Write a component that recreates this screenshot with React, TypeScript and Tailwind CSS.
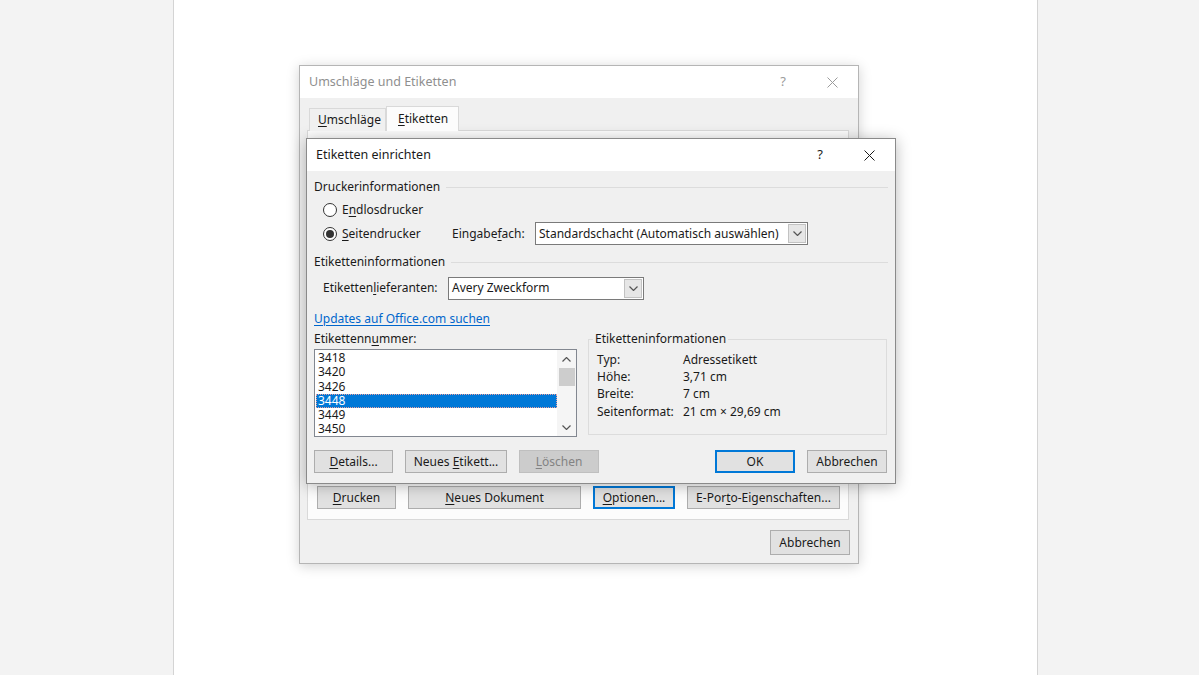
import React from "react";

const U = ({ children }: { children: React.ReactNode }) => (
  <span className="underline decoration-1 underline-offset-[2px]">{children}</span>
);

const CloseIcon = ({ color }: { color: string }) => (
  <svg width="11" height="11" viewBox="0 0 11 11">
    <path d="M0.5 0.5 L10.5 10.5 M10.5 0.5 L0.5 10.5" stroke={color} strokeWidth="1" fill="none" />
  </svg>
);

const Chevron = ({ up, color = "#333" }: { up?: boolean; color?: string }) => (
  <svg width="9" height="5" viewBox="0 0 9 5">
    <path d={up ? "M0.5 4.5 L4.5 0.5 L8.5 4.5" : "M0.5 0.5 L4.5 4.5 L8.5 0.5"} stroke={color} strokeWidth="1.2" fill="none" />
  </svg>
);

const TitleBar = ({ title, inactive }: { title: string; inactive?: boolean }) => {
  const c = inactive ? "#9b9b9b" : "#1a1a1a";
  return (
    <div className="h-[32px] bg-white flex items-center shrink-0">
      <span className={`pl-[9px] text-[12.5px] ${inactive ? "text-[#8f8f8f]" : "text-[#1a1a1a]"}`}>{title}</span>
      <span className="ml-auto text-[13px]" style={{ color: c }}>?</span>
      <span className="ml-[41px] mr-[20px] flex items-center">
        <CloseIcon color={c} />
      </span>
    </div>
  );
};

type BtnProps = { children: React.ReactNode; w: string; focus?: boolean; disabled?: boolean; h?: string };

const Btn = ({ children, w, focus, disabled, h = "h-[23px]" }: BtnProps) => (
  <div
    className={`${w} ${h} shrink-0 flex items-center justify-center text-[12px] ${
      disabled
        ? "bg-[#cccccc] border border-[#bfbfbf] text-[#838383]"
        : focus
        ? "bg-[#e1e1e1] border-2 border-[#0078d7] text-[#1a1a1a]"
        : "bg-[#e1e1e1] border border-[#adadad] text-[#1a1a1a]"
    }`}
  >
    <span>{children}</span>
  </div>
);

const Heading = ({ children }: { children: React.ReactNode }) => (
  <div className="h-[16px] flex items-center">
    <span className="text-[12px] text-[#1a1a1a]">{children}</span>
    <div className="flex-1 h-px bg-[#dcdcdc] ml-[6px]" />
  </div>
);

const Radio = ({ checked, children }: { checked?: boolean; children: React.ReactNode }) => (
  <div className="flex items-center pl-[9px]">
    <div className="w-[14px] h-[14px] rounded-full border border-[#333] bg-white flex items-center justify-center">
      {checked && <div className="w-[8px] h-[8px] rounded-full bg-[#333]" />}
    </div>
    <span className="ml-[5px] text-[12px] text-[#1a1a1a]">{children}</span>
  </div>
);

const Select = ({ value, w, h }: { value: string; w: string; h: string }) => (
  <div className={`${w} ${h} bg-white border border-[#7a7a7a] flex items-stretch`}>
    <span className="flex-1 flex items-center pl-[3px] text-[12px] text-[#1a1a1a]">{value}</span>
    <div className="w-[18px] m-[1px] bg-[#e6e6e6] border border-[#c2c2c2] flex items-center justify-center">
      <Chevron color="#555" />
    </div>
  </div>
);

const items = ["3418", "3420", "3426", "3448", "3449", "3450"];

const info = [
  ["Typ:", "Adressetikett"],
  ["Höhe:", "3,71 cm"],
  ["Breite:", "7 cm"],
  ["Seitenformat:", "21 cm × 29,69 cm"],
];

const SetupDialog = () => (
  <div className="absolute left-[306px] top-[138px] w-[590px] h-[346px] border border-[#8a8a8a] bg-[#f0f0f0] shadow-[0_2px_14px_rgba(0,0,0,0.28)] flex flex-col">
    <TitleBar title="Etiketten einrichten" />
    <div className="flex-1 px-[7px] pt-[8px] flex flex-col">
      <Heading>Druckerinformationen</Heading>
      <div className="mt-[6px] h-[18px] flex items-center">
        <Radio>
          E<U>n</U>dlosdrucker
        </Radio>
      </div>
      <div className="mt-[3px] h-[23px] flex items-center">
        <div className="w-[138px]">
          <Radio checked>
            <U>S</U>eitendrucker
          </Radio>
        </div>
        <span className="w-[83px] text-[12px] text-[#1a1a1a]">
          Eingabe<U>f</U>ach:
        </span>
        <Select value="Standardschacht (Automatisch auswählen)" w="w-[273px]" h="h-[23px]" />
      </div>
      <div className="mt-[9px]">
        <Heading>Etiketteninformationen</Heading>
      </div>
      <div className="mt-[7px] h-[22px] flex items-center">
        <span className="w-[134px] pl-[9px] text-[12px] text-[#1a1a1a]">
          Etiketten<U>l</U>ieferanten:
        </span>
        <Select value="Avery Zweckform" w="w-[196px]" h="h-[23px]" />
      </div>
      <div className="mt-[12px] h-[16px] flex items-center">
        <span className="text-[12px] text-[#0066cc] underline decoration-1 underline-offset-[2px]">
          Updates auf Office.com suchen
        </span>
      </div>
      <div className="mt-[4px] flex gap-[11px]">
        <div className="w-[263px] flex flex-col">
          <span className="h-[16px] flex items-center text-[12px] text-[#1a1a1a]">
            Etikettenn<U>u</U>mmer:
          </span>
          <div className="mt-[2px] h-[88px] bg-white border border-[#828790] flex">
            <div className="flex-1 pl-[1px] pt-[1px] flex flex-col">
              {items.map((it) => (
                <div
                  key={it}
                  className={`h-[14.3px] leading-[14.3px] pl-[2px] text-[12px] ${
                    it === "3448"
                      ? "bg-[#0078d7] text-white outline outline-1 outline-dotted outline-[#e8a0a0] -outline-offset-1"
                      : "text-[#1a1a1a]"
                  }`}
                >
                  {it}
                </div>
              ))}
            </div>
            <div className="w-[19px] bg-[#f5f5f5] flex flex-col items-center">
              <div className="h-[18px] flex items-center justify-center">
                <Chevron up color="#555" />
              </div>
              <div className="w-[16px] h-[18px] bg-[#cdcdcd]" />
              <div className="flex-1" />
              <div className="h-[18px] flex items-center justify-center">
                <Chevron color="#555" />
              </div>
            </div>
          </div>
        </div>
        <fieldset className="w-[299px] h-[104px] border border-[#dcdcdc] m-0 p-0">
          <legend className="ml-[4px] px-[2px] text-[12px] text-[#1a1a1a] leading-[16px]">
            Etiketteninformationen
          </legend>
          <div className="pt-[4px] pl-[8px] flex flex-col">
            {info.map(([k, v]) => (
              <div key={k} className="h-[17.3px] flex items-center text-[12px] text-[#1a1a1a]">
                <span className="w-[86px]">{k}</span>
                <span>{v}</span>
              </div>
            ))}
          </div>
        </fieldset>
      </div>
      <div className="mt-[13px] flex items-center gap-[12px]">
        <Btn w="w-[79px]">
          <U>D</U>etails...
        </Btn>
        <Btn w="w-[102px]">
          Neues <U>E</U>tikett...
        </Btn>
        <Btn w="w-[80px]" disabled>
          <U>L</U>öschen
        </Btn>
        <div className="ml-auto mr-[1px] flex gap-[12px]">
          <Btn w="w-[80px]" focus>
            OK
          </Btn>
          <Btn w="w-[80px]">Abbrechen</Btn>
        </div>
      </div>
    </div>
  </div>
);

const EnvelopeDialog = () => (
  <div className="absolute left-[299px] top-[65px] w-[560px] h-[499px] border border-[#b5b5b5] bg-[#f0f0f0] shadow-[0_2px_12px_rgba(0,0,0,0.18)] flex flex-col">
    <TitleBar title="Umschläge und Etiketten" inactive />
    <div className="flex-1 flex flex-col pl-[7px] pr-[9px] pb-[8px]">
      <div className="mt-[8px] pl-[2px] flex items-end h-[25px] relative z-10 -mb-px">
        <div className="w-[77px] h-[23px] border border-b-0 border-[#d9d9d9] bg-[#f0f0f0] flex items-center pl-[8px] text-[12px] text-[#1a1a1a]">
          <U>U</U>mschläge
        </div>
        <div className="w-[73px] h-[25px] border border-b-0 border-[#d9d9d9] bg-[#fcfcfc] flex items-center pl-[11px] text-[12px] text-[#1a1a1a]">
          <U>E</U>tiketten
        </div>
      </div>
      <div className="flex-1 border border-[#d9d9d9] bg-[#fcfcfc] flex flex-col justify-end pb-[10px] pl-[9px]">
        <div className="flex gap-[12px]">
          <Btn w="w-[79px]">
            <U>D</U>rucken
          </Btn>
          <Btn w="w-[173px]">
            <U>N</U>eues Dokument
          </Btn>
          <Btn w="w-[82px]" focus>
            <U>O</U>ptionen...
          </Btn>
          <Btn w="w-[153px]">
            E-Por<U>t</U>o-Eigenschaften...
          </Btn>
        </div>
      </div>
      <div className="mt-[10px] flex justify-end">
        <div className="-mr-[1px]">
          <Btn w="w-[80px]" h="h-[25px]">
            Abbrechen
          </Btn>
        </div>
      </div>
    </div>
  </div>
);

export default function App() {
  return (
    <div className="relative w-[1199px] h-[675px] overflow-hidden bg-[#f3f3f3] font-['Noto_Sans',sans-serif]">
      <div className="ml-[173px] w-[865px] h-full bg-white border-x border-[#d4d4d4]" />
      <EnvelopeDialog />
      <SetupDialog />
    </div>
  );
}
